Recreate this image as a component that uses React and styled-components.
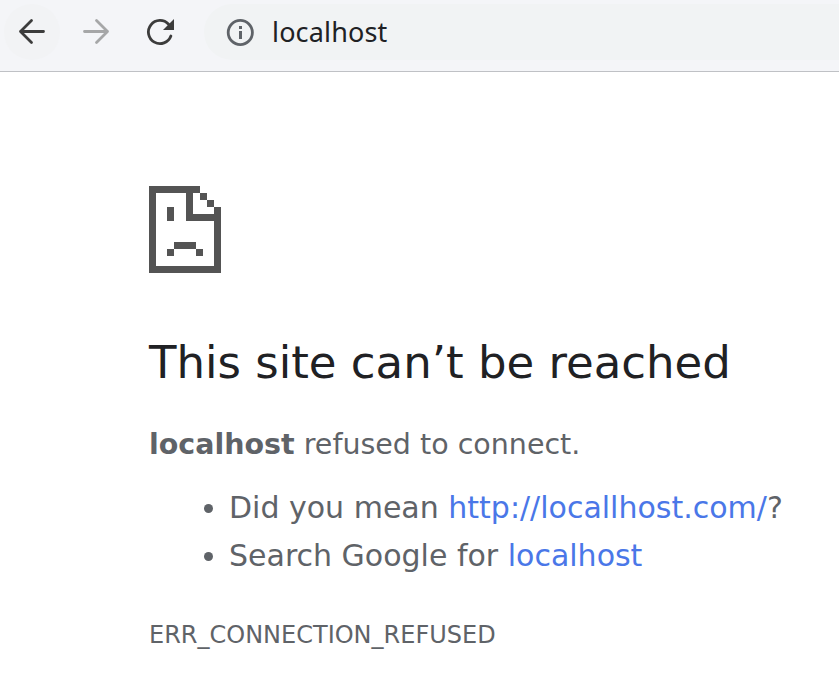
import React from "react";
import styled, { createGlobalStyle } from "styled-components";

const GlobalStyle = createGlobalStyle`
  * { box-sizing: border-box; }
  html, body { margin: 0; padding: 0; background: #fff; }
  body { overflow: hidden; }
`;

const Page = styled.div`
  width: 100%;
  height: 687px;
  overflow: hidden;
  font-family: "DejaVu Sans", sans-serif;
  color: #5f6368;
`;

const Toolbar = styled.header`
  display: flex;
  align-items: flex-start;
  height: 72px;
  padding: 4px 0 0 4px;
  background: #f4f5f8;
  border-bottom: 1px solid #bfc1c5;
`;

const NavButton = styled.button`
  display: flex;
  width: 56px;
  height: 56px;
  margin: 0 8px 0 0;
  padding: 0;
  border: 0;
  border-radius: 50%;
  background: ${({ $active }) => ($active ? "#f2f3f5" : "transparent")};
  color: ${({ $disabled }) => ($disabled ? "#a6a7a8" : "#3c3c3c")};
`;

const AddressBar = styled.div`
  display: flex;
  align-items: center;
  flex: 1;
  height: 56px;
  margin-left: 8px;
  padding-left: 20px;
  border-radius: 28px 0 0 28px;
  background: #f1f3f4;
`;

const Address = styled.span`
  margin-left: 16px;
  font: 27px/36px "Noto Sans", sans-serif;
  letter-spacing: 0.16px;
  color: #202124;
`;

const Content = styled.main`
  padding: 114px 0 0 149px;
`;

const SadPage = styled.svg`
  display: block;
`;

const Heading = styled.h1`
  margin: 63px 0 0;
  font-size: 45px;
  line-height: 54px;
  font-weight: 400;
  color: #202124;
  white-space: nowrap;
`;

const Summary = styled.p`
  margin: 32px 0 0;
  font-size: 28.5px;
  line-height: 45px;
  white-space: nowrap;
`;

const Suggestions = styled.ul`
  margin: 17px 0 0;
  padding: 0 0 0 79px;
  font-size: 30px;
  line-height: 48px;
  list-style: none;
  white-space: nowrap;
`;

const Suggestion = styled.li`
  display: flex;
  align-items: center;
  margin-left: -24px;
  white-space: pre;

  &::before {
    content: "";
    width: 9px;
    height: 9px;
    margin: 1px 16px 0 0;
    border-radius: 50%;
    background: #5f6368;
  }
`;

const Link = styled.a`
  color: #4a77e8;
  text-decoration: none;
`;

const ErrorCode = styled.div`
  margin-top: 36px;
  font-size: 24px;
  line-height: 38px;
`;

export default function App() {
  return (
    <Page>
      <GlobalStyle />
      <Toolbar>
        <NavButton $active aria-label="Back">
          <svg width="56" height="56" fill="none" stroke="currentColor" strokeWidth="2.8" strokeLinecap="round" strokeLinejoin="round">
            <path d="M39.5 27.5H16.5M27.5 16.5L16.5 27.5L27.5 38.5" />
          </svg>
        </NavButton>
        <NavButton $disabled aria-label="Forward">
          <svg width="56" height="56" fill="none" stroke="currentColor" strokeWidth="2.8" strokeLinecap="round" strokeLinejoin="round">
            <path d="M16.5 27.5H39.5M28.5 16.5L39.5 27.5L28.5 38.5" />
          </svg>
        </NavButton>
        <NavButton aria-label="Reload">
          <svg width="56" height="56">
            <path d="M36.6 20.2A11.6 11.6 0 1 0 38.9 32" fill="none" stroke="currentColor" strokeWidth="2.8" strokeLinecap="round" />
            <path d="M42 15V26H31Z" fill="currentColor" />
          </svg>
        </NavButton>
        <AddressBar>
          <svg width="32" height="56" fill="#5f6368">
            <circle cx="16.3" cy="28.5" r="12.1" fill="none" stroke="#5f6368" strokeWidth="2.8" />
            <rect x="15" y="22" width="3" height="3" />
            <rect x="15" y="27" width="3" height="8" />
          </svg>
          <Address>localhost</Address>
        </AddressBar>
      </Toolbar>
      <Content>
        <SadPage width="72" height="87" fill="#545454" shapeRendering="crispEdges">
          <path d="M0 0H51V7H44V28H65V21H72V87H0ZM7 7V80H65V35H37V7Z" fillRule="evenodd" />
          <path d="M51 7h7v7h-7zM58 14h7v7h-7zM18 21h7v14h-7zM25 56h22v7h-22zM18 63h7v7h-7zM47 63h7v7h-7z" />
        </SadPage>
        <Heading>This site can’t be reached</Heading>
        <Summary><strong>localhost</strong> refused to connect.</Summary>
        <Suggestions>
          <Suggestion><span>Did you mean <Link>http://locallhost.com/</Link>?</span></Suggestion>
          <Suggestion><span>Search Google for <Link>localhost</Link></span></Suggestion>
        </Suggestions>
        <ErrorCode>ERR_CONNECTION_REFUSED</ErrorCode>
      </Content>
    </Page>
  );
}
